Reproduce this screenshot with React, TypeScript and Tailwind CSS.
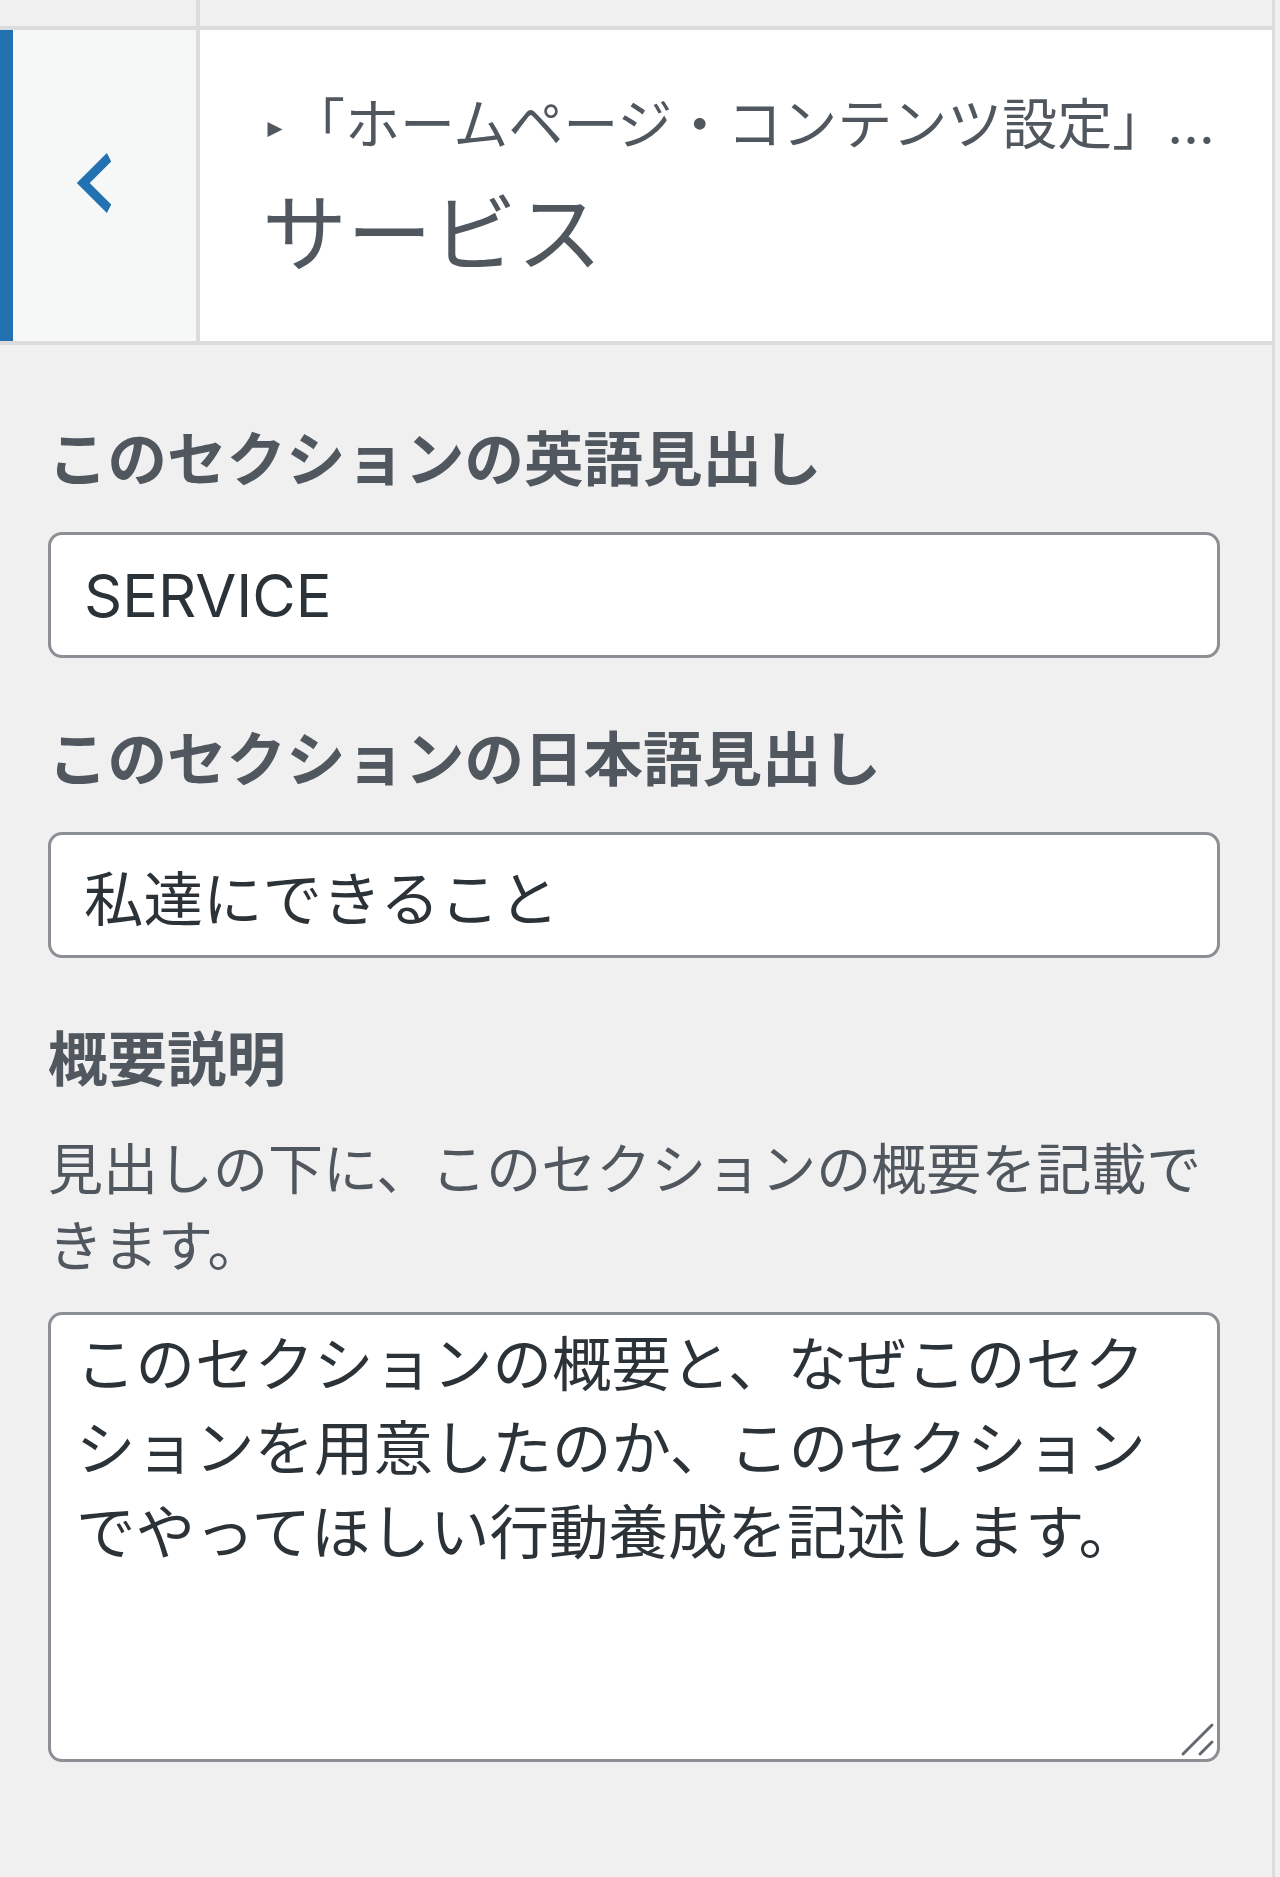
import { useState } from 'react'

const sans = "font-['Inter','Noto_Sans_CJK_JP',sans-serif]"

function Field({ label, value }: { label: string; value: string }) {
  const [v, setV] = useState(value)
  return (
    <div className="mb-[59px]">
      <label className="block text-[59.5px] leading-[84px] font-bold text-[#50575e]">{label}</label>
      <input
        value={v}
        onChange={(e) => setV(e.target.value)}
        className="mt-[31px] block h-[126px] w-full rounded-[14px] border-[3px] border-[#8c8f94] bg-white px-[33px] text-[59.5px] text-[#2c3338] outline-none"
      />
    </div>
  )
}

export default function App() {
  return (
    <div className={`min-h-[1877px] w-full bg-[#f0f0f1] ${sans}`}>
      <div className="min-h-[1877px] w-[1275px] border-r-[3px] border-[#dcdcde]">
        {/* strip left over from the panel above */}
        <div className="flex h-[30px] border-b-4 border-[#dcdcde]">
          <div className="w-[200px] border-r-4 border-[#dcdcde]" />
        </div>

        {/* section header */}
        <div className="flex h-[315px] border-b-4 border-[#dcdcde] bg-white">
          <button className="flex w-[200px] shrink-0 items-center border-l-[13px] border-r-4 border-l-[#2271b1] border-r-[#dcdcde] bg-[#f6f7f7] pl-[38px]">
            <svg viewBox="0 0 20 20" className="-mt-[5px] h-[86px] w-[86px] fill-[#2271b1]">
              <path d="M14 5l-5 5 5 5-1 2-7-7 7-7z" />
            </svg>
          </button>
          <div className="min-w-0 flex-1 pl-[67px] pt-[61px]">
            <div className="flex items-start text-[55px] leading-[66px] text-[#50575e]">
              <svg viewBox="0 0 16 16" className="mt-[31px] h-[15px] w-[16px] shrink-0 fill-[#50575e]">
                <polygon points="0,0 16,8 0,16" />
              </svg>
              <span className="ml-[7px] whitespace-nowrap">「ホームページ・コンテンツ設定」…</span>
            </div>
            <h3 className="-ml-[5px] mt-[23px] text-[85px] leading-[110px] font-normal text-[#50575e]">サービス</h3>
          </div>
        </div>

        {/* controls */}
        <div className="pl-[48px] pr-[52px] pt-[72px]">
          <Field label="このセクションの英語見出し" value="SERVICE" />
          <Field label="このセクションの日本語見出し" value="私達にできること" />

          <div>
            <label className="block text-[59.5px] leading-[84px] font-bold text-[#50575e]">概要説明</label>
            <p className="mt-[30px] text-[55px] leading-[77px] text-[#50575e]">
              見出しの下に、このセクションの概要を記載できます。
            </p>
            <div className="relative mt-[27px]">
              <textarea
                defaultValue="このセクションの概要と、なぜこのセクションを用意したのか、このセクションでやってほしい行動養成を記述します。"
                className="block h-[450px] w-full resize-none rounded-[14px] border-[3px] border-[#8c8f94] bg-white px-[25px] pt-[7px] text-[59.5px] leading-[84px] text-[#2c3338] outline-none"
              />
              <svg viewBox="0 0 40 40" className="pointer-events-none absolute bottom-[3px] right-[4px] h-[40px] w-[40px] stroke-[#646970]" strokeWidth="3" strokeLinecap="round">
                <line x1="7" y1="35" x2="36" y2="6" />
                <line x1="24" y1="35" x2="36" y2="23" />
              </svg>
            </div>
          </div>
        </div>
      </div>
    </div>
  )
}
